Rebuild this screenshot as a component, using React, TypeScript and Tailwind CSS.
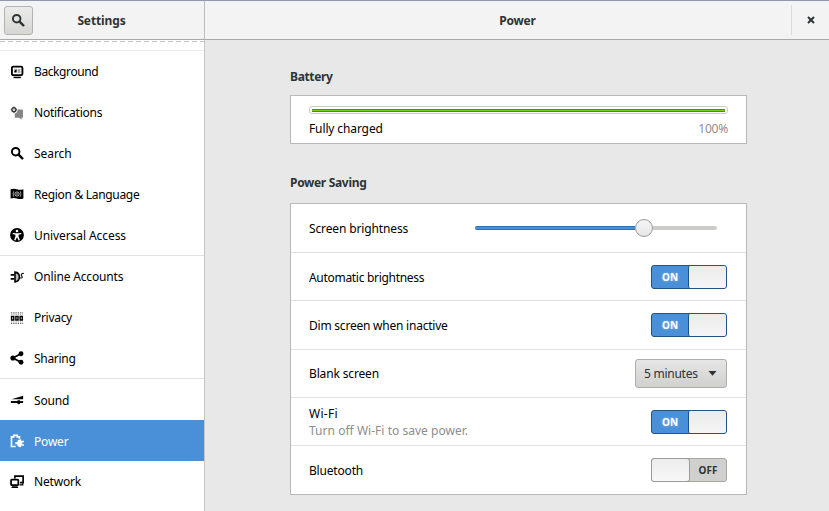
import type { ReactNode } from "react";

type IconProps = { children: ReactNode };

function Icon({ children }: IconProps) {
  return (
    <svg viewBox="0 0 16 16" width="14" height="14" className="shrink-0" fill="currentColor">
      {children}
    </svg>
  );
}

const searchShape = (
  <>
    <circle cx="6.5" cy="6.5" r="4.3" fill="none" stroke="currentColor" strokeWidth="2.2" />
    <path d="M9.8 9.8l4.3 4.3" stroke="currentColor" strokeWidth="2.7" strokeLinecap="round" />
  </>
);

const icons = {
  background: (
    <Icon>
      <rect x="2.2" y="1.8" width="12" height="9.8" rx="1.6" fill="none" stroke="currentColor" strokeWidth="2.1" />
      <path d="M4.5 4.2h3.2v5H4.5z" opacity=".3" />
      <path d="M5.5 6.2l2-1.4v3.4H4.8z" />
      <path d="M8.8 4.5h3v4.6h-3z" opacity=".35" />
      <path d="M4 14.2h8.4" stroke="currentColor" strokeWidth="1.7" />
    </Icon>
  ),
  notifications: (
    <Icon>
      <path d="M5.5 4h8.3q1 0 1 1v7.5q0 1-1 1h-.6v2.3l-2.7-2.3h-4q-1 0-1-1z" fill="#858585" />
      <circle cx="4.5" cy="4.3" r="4.2" fill="#fff" />
      <circle cx="4.5" cy="4.3" r="2.3" fill="none" stroke="#333" strokeWidth="1.5" />
      <path d="M4.5.7v1.4M4.5 6.5v1.4M.9 4.3h1.4M6.7 4.3h1.4" stroke="#444" strokeWidth="1.2" />
      <circle cx="4.5" cy="4.3" r=".8" fill="#999" />
    </Icon>
  ),
  search: <Icon>{searchShape}</Icon>,
  region: (
    <Icon>
      <path d="M.7 2.6q3.6-1.2 7.2 0t7.4 0v10.5q-3.8 1.2-7.4 0t-7.2 0z" />
      <g fill="none" stroke="#fff">
        <circle cx="8" cy="8" r="2.4" strokeWidth=".8" />
        <path d="M4.2 5q-1.3 3 0 6M11.8 5q1.3 3 0 6" strokeWidth=".7" />
      </g>
      <circle cx="8" cy="8" r=".8" fill="#fff" />
    </Icon>
  ),
  access: (
    <Icon>
      <circle cx="8" cy="8" r="7.9" />
      <circle cx="8" cy="3.4" r="1.5" fill="#fff" />
      <path d="M3.2 5.6l3.3.5h3l3.3-.5.2 1.3-3.2.9v1.9l1.5 4-1.4.5L8 10.7l-1.9 3.5-1.4-.5 1.5-4V7.8L3 6.9z" fill="#fff" />
    </Icon>
  ),
  accounts: (
    <Icon>
      <path d="M.8 4.7h4.2v2H.8zM.8 9.2h4.2v2H.8z" />
      <path d="M5.7 2.4q5 .6 5 5.6t-5 5.6z" fill="#bbb" stroke="currentColor" strokeWidth="1.8" />
      <path d="M11.2 9.2h1.6q1.2 0 1.200-1.300t-1.100-1.400q-.5-2.800 3-2.800" fill="none" stroke="currentColor" strokeWidth="1.200" />
    </Icon>
  ),
  privacy: (
    <Icon>
      <g fill="none" stroke="currentColor">
        <path d="M1.8 6.2h2.5v4H1.8zM6.7 6.2h2.5v4H6.7zM11.6 6.2h2.5v4h-2.5z" strokeWidth="1.6" />
        <path d="M1 2.2h14M1 14.2h14" strokeWidth="1.5" strokeDasharray="1.5 1.1" opacity=".6" />
        <path d="M1.5 4h13M1.5 12.3h13" strokeWidth="1" strokeDasharray="1 1.5" opacity=".5" />
      </g>
    </Icon>
  ),
  sharing: (
    <Icon>
      <path d="M12.5 3.2L3.3 8l9.2 4.8" fill="none" stroke="currentColor" strokeWidth="1.9" />
      <circle cx="3.3" cy="8" r="2.9" />
      <circle cx="12.6" cy="3.1" r="2.8" />
      <circle cx="12.6" cy="12.9" r="2.8" />
    </Icon>
  ),
  sound: (
    <Icon>
      <path d="M1.8 7L15 3v4z" />
      <path d="M1 9.2h14v2.2H1z" />
      <path d="M8.6 8.4h2.8v3.2L10 13.200l-1.400-1.600z" />
    </Icon>
  ),
  power: (
    <Icon>
      <path d="M6.5 14.3H1.7V3.2h2.6V1.5h4v1.7h2.5v2.2" fill="none" stroke="currentColor" strokeWidth="1.9" />
      <path d="M12.7 6v1.8H16v1.6h-2v2.4h2v1.6h-3.3v1.8q-4.2 0-4.6-3.4H6V9.4h2.1Q8.5 6 12.7 6z" />
    </Icon>
  ),
  network: (
    <Icon>
      <path d="M5.6 4V1.3H15V8.8H11.5" fill="none" stroke="currentColor" strokeWidth="1.9" />
      <path d="M10.8 11.3h3.8v-2" fill="none" stroke="currentColor" strokeWidth="1.4" />
      <rect x="1.2" y="5.2" width="8.3" height="6.3" rx=".8" fill="none" stroke="currentColor" strokeWidth="2" />
      <path d="M2.5 12.8h6l1 2h-8z" />
    </Icon>
  ),
};

type Item = { label: string; icon: ReactNode; tracking: string; active?: boolean };

const groups: Item[][] = [
  [
    { label: "Background", icon: icons.background, tracking: "tracking-[-0.4px]" },
    { label: "Notifications", icon: icons.notifications, tracking: "tracking-[-0.24px]" },
    { label: "Search", icon: icons.search, tracking: "tracking-[-0.06px]" },
    { label: "Region & Language", icon: icons.region, tracking: "tracking-[-0.3px]" },
    { label: "Universal Access", icon: icons.access, tracking: "tracking-[-0.08px]" },
  ],
  [
    { label: "Online Accounts", icon: icons.accounts, tracking: "tracking-[-0.15px]" },
    { label: "Privacy", icon: icons.privacy, tracking: "tracking-[-0.3px]" },
    { label: "Sharing", icon: icons.sharing, tracking: "tracking-[-0.3px]" },
  ],
  [
    { label: "Sound", icon: icons.sound, tracking: "tracking-[-0.2px]" },
    { label: "Power", icon: icons.power, tracking: "tracking-[-0.2px]", active: true },
    { label: "Network", icon: icons.network, tracking: "tracking-[-0.18px]" },
  ],
];

function Toggle({ on }: { on: boolean }) {
  if (on) {
    return (
      <div className="mt-px flex h-6 w-[76px] rounded-[3px] border border-[#265380] bg-[#4a90d9]">
        <span className="flex flex-1 items-center justify-center text-[10px] font-bold text-white text-shadow-[0_0_3px_#ffffff66]">ON</span>
        <span className="w-[38px] rounded-[2px] border-l border-[#1c5187] bg-linear-to-b from-[#ebebeb] to-[#f5f5f5]" />
      </div>
    );
  }
  return (
    <div className="flex h-6 w-[76px] rounded-[3px] border border-[#a6a6a3] bg-[#d0d0ce]">
      <span className="-my-px -ml-px w-[39px] rounded-[3px] border border-[#9a9a98] bg-linear-to-b from-[#ededed] to-[#f8f8f8]" />
      <span className="flex flex-1 items-center justify-center text-[10px] font-bold text-[#2e3436]">OFF</span>
    </div>
  );
}

type RowProps = { label: string; tracking: string; note?: string; children: ReactNode };

function Row({ label, tracking, note, children }: RowProps) {
  return (
    <div className="flex h-[48.3px] items-center justify-between border-b border-[#e1e1e1] pr-[19px] pl-[18px] first:h-[49px] last:border-b-0">
      <div className="pt-px leading-[17px]">
        <div className={tracking}>{label}</div>
        {note && <div className="tracking-[0.03px] text-[#8b8e8f]">{note}</div>}
      </div>
      {children}
    </div>
  );
}

export default function App() {
  return (
    <div className="flex h-[511px] w-[829px] flex-col overflow-hidden bg-[#e8e8e8] font-['Noto_Sans',sans-serif] text-[12px] whitespace-nowrap text-black">
      <header className="flex h-10 shrink-0 border-t border-b border-t-[#9496ad] border-b-[#a8a8a8] bg-[#f3f3f3] font-bold text-[#2e3436]">
        <div className="flex w-[205px] items-center border-r border-[#bdbdbd] pl-1">
          <button className="flex h-[29px] w-[29px] items-center justify-center rounded-[3px] border border-[#b3b3b1] bg-linear-to-b from-[#ebebea] to-[#d6d6d4] pr-px">
            <Icon>{searchShape}</Icon>
          </button>
          <h1 className="w-[137px] pt-px text-center tracking-[-0.12px]">Settings</h1>
        </div>
        <h1 className="flex flex-1 items-center justify-center pt-px pl-[39px] tracking-[-0.2px]">Power</h1>
        <div className="my-1 flex w-[38px] items-center justify-center border-l border-[#dcdcdc]">
          <svg width="8" height="8" viewBox="0 0 8 8">
            <path d="M1 1l6 6M7 1L1 7" stroke="#2e3436" strokeWidth="2" />
          </svg>
        </div>
      </header>

      <div className="flex min-h-0 flex-1">
        <nav className="w-[205px] shrink-0 border-r border-[#c6c6c6] bg-white">
          <div className="h-[11px] border-b border-[#ebebeb] pt-px">
            <div className="h-px bg-[repeating-linear-gradient(90deg,#c4c4c4_0_5px,#ffffff_5px_8px)]" />
          </div>
          {groups.map((group, i) => (
            <div key={i} className="border-b border-[#e1e1e1] last:border-b-0">
              {group.map((item) => (
                <div
                  key={item.label}
                  className={
                    item.active
                      ? "flex h-[40.8px] items-center gap-2.5 bg-[#4a90d9] pt-px pl-2.5 text-white"
                      : "flex h-[40.8px] items-center gap-2.5 pt-px pl-2.5"
                  }
                >
                  {item.icon}
                  <span className={`pt-px ${item.tracking}`}>{item.label}</span>
                </div>
              ))}
            </div>
          ))}
        </nav>

        <main className="flex-1 pt-7 pl-[85px]">
          <h2 className="h-[18px] leading-[18px] font-bold tracking-[-0.34px] text-[#2e3436]">Battery</h2>
          <section className="mt-[9px] h-[49px] w-[457px] border border-[#b8b8b8] bg-white pt-[10px] pr-[18px] pl-[18px]">
            <div className="h-2 w-[419px] rounded-[3px] border border-[#c9c9c9] px-0.5 pt-0.5">
              <div className="h-[3px] border-y border-[#4e8a1a] bg-[#73d216]" />
            </div>
            <div className="mt-[6px] flex justify-between leading-[18px]">
              <span className="tracking-[-0.12px]">Fully charged</span>
              <span className="tracking-[-0.2px] text-[#8b8e8f]">100%</span>
            </div>
          </section>

          <h2 className="mt-[30px] h-[18px] leading-[18px] font-bold tracking-[-0.32px] text-[#2e3436]">Power Saving</h2>
          <section className="mt-[11px] w-[457px] border border-[#b8b8b8] bg-white">
            <Row label="Screen brightness" tracking="tracking-[-0.13px]">
              <div className="mr-[10px] flex w-[242px] items-center">
                <span className="h-1 w-[160px] rounded-l-sm border-y border-[#2a6fb5] bg-[#4a90d9]" />
                <span className="h-[18px] w-[18px] rounded-full border border-[#999] bg-linear-to-b from-[#f5f5f5] to-[#e6e6e6]" />
                <span className="h-1 flex-1 rounded-r-sm bg-[#cbcbc9]" />
              </div>
            </Row>
            <Row label="Automatic brightness" tracking="tracking-[-0.3px]"><Toggle on /></Row>
            <Row label="Dim screen when inactive" tracking="tracking-[-0.22px]"><Toggle on /></Row>
            <Row label="Blank screen" tracking="tracking-[-0.15px]">
              <button className="mt-px flex h-[29px] w-[92px] items-center justify-between rounded-[3px] border border-[#adadab] bg-linear-to-b from-[#e6e6e6] to-[#d0d0ce] pr-[9px] pl-2 text-[#2e3436]">
                <span className="pt-px tracking-[-0.26px]">5 minutes</span>
                <svg width="9" height="5" viewBox="0 0 9 5" fill="#2e3436"><path d="M.5 0h8L4.5 4.8z" /></svg>
              </button>
            </Row>
            <Row label="Wi-Fi" tracking="tracking-[0.27px]" note="Turn off Wi-Fi to save power."><Toggle on /></Row>
            <Row label="Bluetooth" tracking="tracking-[-0.18px]"><Toggle on={false} /></Row>
          </section>
        </main>
      </div>
    </div>
  );
}
